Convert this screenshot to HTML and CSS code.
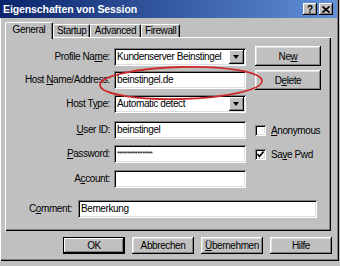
FILE: index.html
```html
<!DOCTYPE html>
<html>

<head>
    <meta charset="utf-8">
    <title>Eigenschaften von Session</title>
    <link rel="stylesheet" href="styles.css">
</head>

<body>
    <div class="window">
        <div class="titlebar">
            <span class="title">Eigenschaften von Session</span>
            <div class="title-buttons">
                <span class="tb-btn help">?</span>
                <span class="tb-btn">
                    <svg width="8" height="7" viewBox="0 0 8 7"><path d="M0.5 0.5 L7.5 6.5 M7.5 0.5 L0.5 6.5" stroke="#000" stroke-width="1.6"/></svg>
                </span>
            </div>
        </div>

        <div class="tabs">
            <div class="tab active">General</div>
            <div class="tab">Startup</div>
            <div class="tab">Advanced</div>
            <div class="tab">Firewall</div>
        </div>

        <div class="panel">
            <div class="form">
                <label class="label">Profile Na<u>m</u>e:</label>
                <div class="field combo">Kundenserver Beinstingel<span class="drop"></span></div>
                <div class="side"><span class="btn btn-new">Ne<u>w</u></span></div>

                <label class="label">Host <u>N</u>ame/Address:</label>
                <div class="field">beinstingel.de</div>
                <div class="side"><span class="btn btn-delete">D<u>e</u>lete</span></div>

                <label class="label">Host T<u>y</u>pe:</label>
                <div class="field combo">Automatic detect<span class="drop"></span></div>
                <div class="side"></div>

                <label class="label"><u>U</u>ser ID:</label>
                <div class="field">beinstingel</div>
                <div class="side"><span class="check"><span class="box"></span><u>A</u>nonymous</span></div>

                <label class="label"><u>P</u>assword:</label>
                <div class="field password">**************</div>
                <div class="side">
                    <span class="check">
                        <span class="box"><svg width="7" height="7" viewBox="0 0 7 7"><path d="M0.5 3 L2.5 5.5 L6.5 0.5" fill="none" stroke="#000" stroke-width="1.6"/></svg></span>Sa<u>v</u>e Pwd
                    </span>
                </div>

                <label class="label">A<u>c</u>count:</label>
                <div class="field"></div>
                <div class="side"></div>
            </div>

            <div class="comment-row">
                <label class="comment-label">C<u>o</u>mment:</label>
                <div class="field comment">Bemerkung</div>
            </div>

            <!-- rote Markierung um den Hostnamen -->
            <svg class="highlight" width="326" height="194">
                <ellipse cx="176" cy="46" rx="81" ry="16" transform="rotate(-1.5 176 46)" fill="none" stroke="#cc2a2a" stroke-width="1.8"/>
            </svg>
        </div>

        <div class="actions">
            <span class="btn default">OK</span>
            <span class="btn">Abbrechen</span>
            <span class="btn"><u>Ü</u>bernehmen</span>
            <span class="btn">Hilfe</span>
        </div>
    </div>
</body>

</html>
```

FILE: styles.css
```css
* {
    padding: 0;
    margin: 0;
    box-sizing: border-box;
}

body {
    width: 340px;
    height: 266px;
    background: #c0c0c0;
    font-family: "Liberation Sans", Arial, sans-serif;
    font-size: 10px;
    letter-spacing: -0.4px;
    color: #000;
    overflow: hidden;
}

u {
    text-decoration: underline;
}

.window {
    width: 339px;
    height: 261px;
    background: #c0c0c0;
    box-shadow: inset 1px 0 #fff, inset -1px -1px #000, inset -2px -2px #808080;
}

/* Titelleiste */
.titlebar {
    display: flex;
    align-items: center;
    justify-content: space-between;
    width: 337px;
    height: 18px;
    padding: 0 4px 0 3px;
    background: linear-gradient(to right, #0a246a, #6090d8);
}

.title {
    color: #fff;
    font-weight: bold;
    font-size: 10.5px;
    letter-spacing: -0.1px;
}

.title-buttons {
    display: flex;
    gap: 2px;
}

.tb-btn {
    display: flex;
    align-items: center;
    justify-content: center;
    width: 14px;
    height: 12px;
    background: #c0c0c0;
    font-weight: bold;
    font-size: 10px;
    letter-spacing: 0;
    box-shadow: inset -1px -1px #000, inset 1px 1px #fff, inset -2px -2px #808080;
}

/* Reiter */
.tabs {
    display: flex;
    align-items: flex-end;
    height: 19px;
    padding-left: 5px;
    position: relative;
    z-index: 1;
}

.tab {
    height: 13px;
    line-height: 12px;
    text-align: center;
    border-top: 1px solid #fff;
    border-left: 1px solid #fff;
    border-right: 1px solid #000;
    border-radius: 2px 2px 0 0;
    box-shadow: inset -1px 0 #808080;
    padding: 0 3px;
}

.tab:nth-child(2) { width: 37px; }
.tab:nth-child(3) { width: 51px; }
.tab:nth-child(4) { width: 39px; }

.tab.active {
    width: 48px;
    height: 17px;
    line-height: 14px;
    margin-bottom: -2px;
    background: #c0c0c0;
}

.panel {
    position: relative;
    width: 326px;
    height: 194px;
    margin-left: 5px;
    padding-top: 11px;
    box-shadow: inset 1px 1px #fff, inset -1px -1px #000, inset -2px -2px #808080;
}

.form {
    display: grid;
    grid-template-columns: 109px 132px 75px;
    grid-template-rows: 23px 24px 26px 24px 25px 18px;
}

.label {
    text-align: right;
    line-height: 18px;
    padding-right: 4px;
    white-space: nowrap;
}

.field {
    position: relative;
    height: 18px;
    line-height: 18px;
    padding-left: 3px;
    background: #fff;
    white-space: nowrap;
    overflow: hidden;
    box-shadow: inset 1px 1px #808080, inset -1px -1px #fff, inset 2px 2px #000, inset -2px -2px #dfdfdf;
}

.password {
    font-size: 8px;
    letter-spacing: -0.6px;
}

.drop {
    position: absolute;
    top: 2px;
    right: 2px;
    width: 15px;
    height: 14px;
    background: #c0c0c0;
    box-shadow: inset -1px -1px #000, inset 1px 1px #fff, inset -2px -2px #808080;
}

.drop::after {
    content: "";
    position: absolute;
    left: 4px;
    top: 5px;
    border-left: 3.5px solid transparent;
    border-right: 3.5px solid transparent;
    border-top: 4px solid #000;
}

.side {
    padding-left: 9px;
}

.btn {
    display: flex;
    align-items: center;
    justify-content: center;
    width: 62px;
    height: 17px;
    background: #c0c0c0;
    box-shadow: inset -1px -1px #000, inset 1px 1px #fff, inset -2px -2px #808080, inset 2px 2px #dfdfdf;
}

.btn-new,
.btn-delete {
    width: 66px;
    height: 20px;
}

.btn-new {
    margin-top: -2px;
}

.btn-delete {
    margin-top: -1px;
}

.check {
    display: flex;
    align-items: center;
    height: 18px;
    white-space: nowrap;
}

.box {
    display: flex;
    align-items: center;
    justify-content: center;
    width: 11px;
    height: 11px;
    margin-right: 5px;
    background: #fff;
    box-shadow: inset 1px 1px #808080, inset -1px -1px #fff, inset 2px 2px #000, inset -2px -2px #dfdfdf;
}

.comment-row {
    display: flex;
    margin-top: 12px;
    padding-left: 24px;
}

.comment-label {
    width: 49px;
    line-height: 18px;
    white-space: nowrap;
}

.comment {
    width: 239px;
}

.highlight {
    position: absolute;
    left: 0;
    top: 0;
    pointer-events: none;
}

.actions {
    display: flex;
    justify-content: flex-end;
    gap: 7px;
    margin-top: 6px;
    padding-right: 7px;
}

.btn.default {
    box-shadow: inset 0 0 0 1px #000, inset -2px -2px #000, inset 2px 2px #fff, inset -3px -3px #808080;
}
```
